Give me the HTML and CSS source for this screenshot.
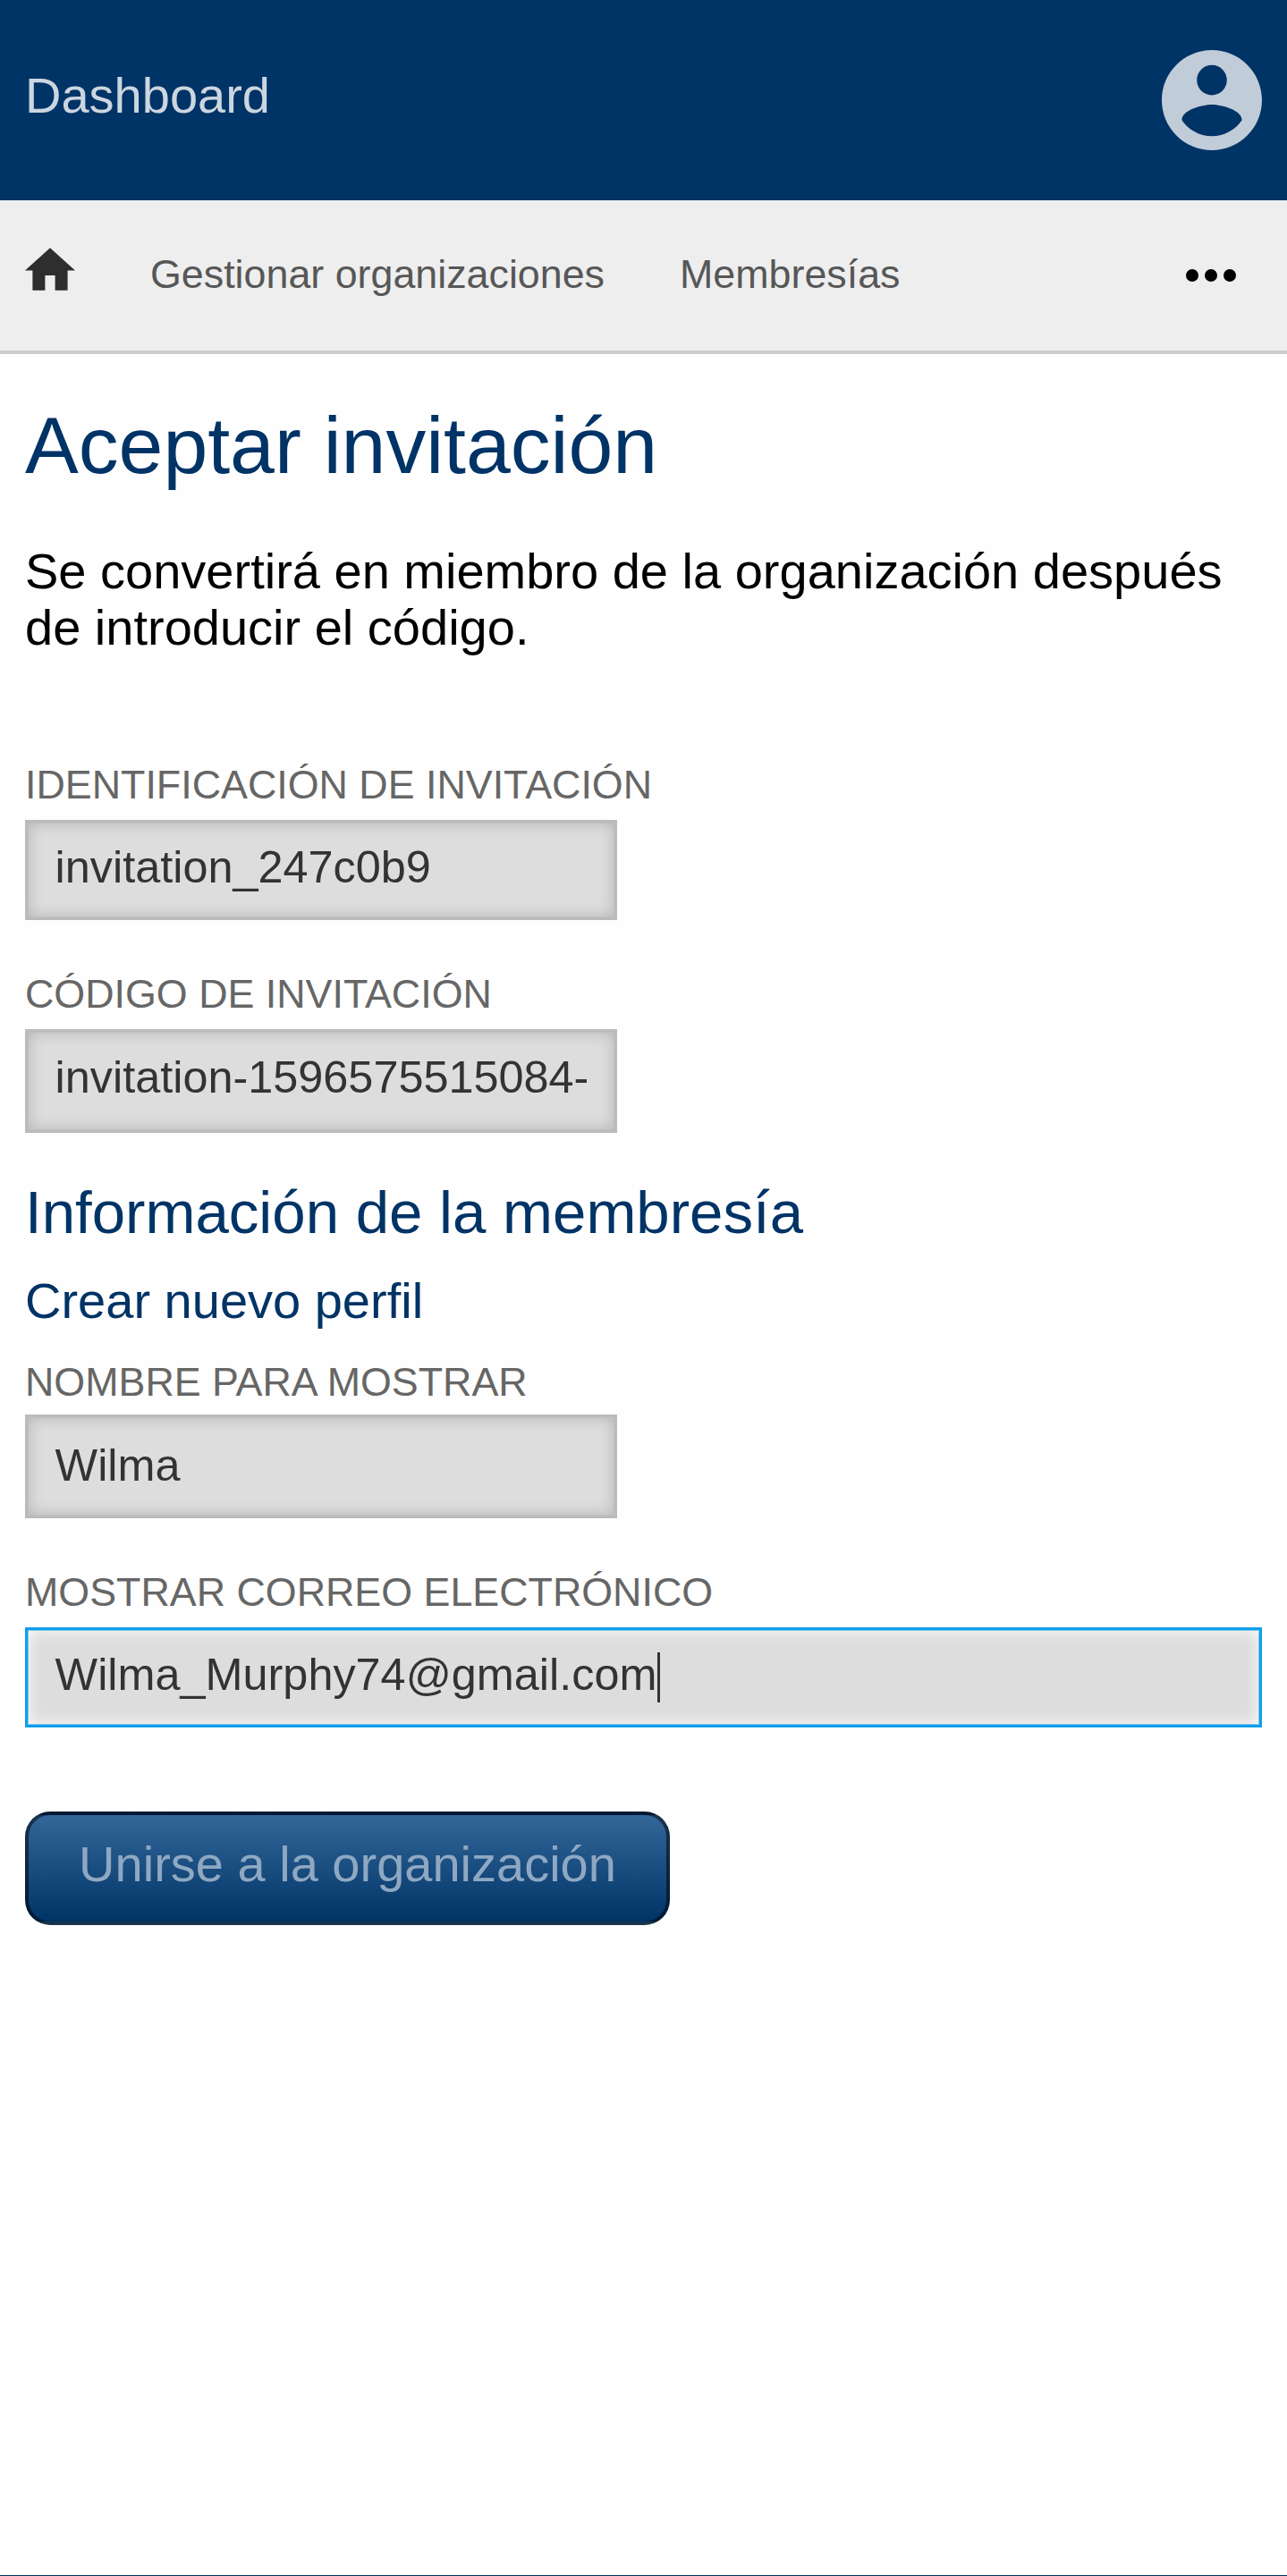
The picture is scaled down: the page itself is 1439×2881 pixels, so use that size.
FILE: index.html
```
<!DOCTYPE html>
<html lang="es">
<head>
<meta charset="utf-8">
<title>Aceptar invitación</title>
<link rel="stylesheet" href="styles.css">
</head>
<body>
<header class="topbar">
  <span class="brand">Dashboard</span>
  <svg class="account" viewBox="2 2 20 20"><path d="M12 2C6.48 2 2 6.48 2 12s4.48 10 10 10 10-4.48 10-10S17.52 2 12 2zm0 3c1.66 0 3 1.34 3 3s-1.34 3-3 3-3-1.34-3-3 1.34-3 3-3zm0 14.2c-2.5 0-4.71-1.28-6-3.22.03-1.99 4-3.08 6-3.08 1.99 0 5.97 1.09 6 3.08-1.29 1.94-3.5 3.22-6 3.22z"/></svg>
</header>
<nav class="nav">
  <svg class="home" viewBox="2 3 20 17"><path d="M10 20v-6h4v6h5v-8h3L12 3 2 12h3v8z"/></svg>
  <a class="nav-link">Gestionar organizaciones</a>
  <a class="nav-link">Membresías</a>
  <svg class="more" viewBox="0 0 56 14"><circle cx="7" cy="7" r="7"/><circle cx="28" cy="7" r="7"/><circle cx="49" cy="7" r="7"/></svg>
</nav>
<main class="content">
  <h1 class="title">Aceptar invitación</h1>
  <p class="intro">Se convertirá en miembro de la organización después de introducir el código.</p>
  <form class="form">
    <div class="field">
      <label class="label" for="id">Identificación de invitación</label>
      <input class="input" id="id" value="invitation_247c0b9">
    </div>
    <div class="field">
      <label class="label" for="code">Código de invitación</label>
      <input class="input input-tall" id="code" value="invitation-1596575515084-">
    </div>
    <h2 class="subtitle">Información de la membresía</h2>
    <h3 class="section">Crear nuevo perfil</h3>
    <div class="field field-name">
      <label class="label" for="name">Nombre para mostrar</label>
      <input class="input input-tall" id="name" value="Wilma">
    </div>
    <div class="field">
      <label class="label">Mostrar correo electrónico</label>
      <div class="input input-active">Wilma_Murphy74@gmail.com<span class="caret"></span></div>
    </div>
    <button class="submit" type="button">Unirse a la organización</button>
  </form>
</main>
<footer class="footer"></footer>
</body>
</html>
```
FILE: styles.css
```
* { box-sizing: border-box; }
body {
  margin: 0;
  height: 2881px;
  display: flex;
  flex-direction: column;
  background: #fefefe;
  font: 56px/63px "Liberation Sans", Arial, sans-serif;
  color: #000;
}
.topbar {
  flex: none;
  height: 224px;
  padding: 0 28px;
  display: flex;
  align-items: center;
  justify-content: space-between;
  background: #003366;
}
.brand { color: #ccd6e0; padding-bottom: 12px; }
.account { width: 112px; height: 112px; fill: #c0ccd8; }
.nav {
  flex: none;
  height: 172px;
  padding: 0 57px 0 28px;
  display: flex;
  align-items: center;
  background: #eee;
  border-bottom: 4px solid #ccc;
}
.home { width: 56px; height: 48px; fill: #2e2e2e; margin: 0 84px 14px 0; }
.nav-link { font-size: 44.8px; line-height: 52px; color: #575757; margin-right: 84px; padding-bottom: 4px; }
.more { width: 56px; height: 14px; margin-left: auto; }
.content { flex: 1; padding: 51px 28px 0; }
h1, h2, h3, p { margin: 0; font-weight: normal; }
.title { font-size: 89.6px; line-height: 102px; color: #003366; }
.intro { margin-top: 58px; }
.form { margin-top: 118px; }
.field { display: flex; flex-direction: column; align-items: flex-start; margin-bottom: 56px; }
.label {
  font-size: 44.8px;
  line-height: 52px;
  margin-bottom: 14px;
  color: #666;
  text-transform: uppercase;
}
.input {
  width: 662px;
  height: 112px;
  padding: 21px 30.6px 28px;
  border: 3px solid #bbb;
  border-radius: 0;
  background: #ddd;
  box-shadow: inset 0 0 0 1px rgba(187, 187, 187, 0.5), inset 0 0 17px rgba(0, 0, 0, 0.2);
  font: 50.4px/57px "Liberation Sans", Arial, sans-serif;
  color: #333;
  outline: none;
}
.input-tall { height: 116px; padding-top: 22px; padding-bottom: 31px; }
.input-active {
  width: 100%;
  border-color: #119eeb;
  box-shadow: inset 0 0 0 1px rgba(17, 158, 235, 0.5), inset 0 0 17px #fff;
}
.caret {
  display: inline-block;
  width: 3px;
  height: 56px;
  margin-left: 1px;
  vertical-align: -14px;
  background: #333;
}
.field + .subtitle { margin-top: -6px; }
.subtitle { font-size: 67.2px; line-height: 77px; color: #003366; }
.section { font-size: 56px; line-height: 63px; margin-top: 29px; color: #003366; }
.field-name { margin-top: 33px; }
.field-name .label { margin-bottom: 11px; }
.field-name .input { padding-top: 25px; padding-bottom: 28px; }
.submit {
  display: block;
  width: 721px;
  height: 127px;
  margin-top: 94px;
  padding: 0 0 11px;
  border: 4px solid rgba(0, 0, 0, 0.5);
  border-radius: 28px;
  background: linear-gradient(#336699, #003366);
  font: 56px/63px "Liberation Sans", Arial, sans-serif;
  color: #8fa8c2;
}
.footer { flex: none; height: 1px; background: #003366; }
```
